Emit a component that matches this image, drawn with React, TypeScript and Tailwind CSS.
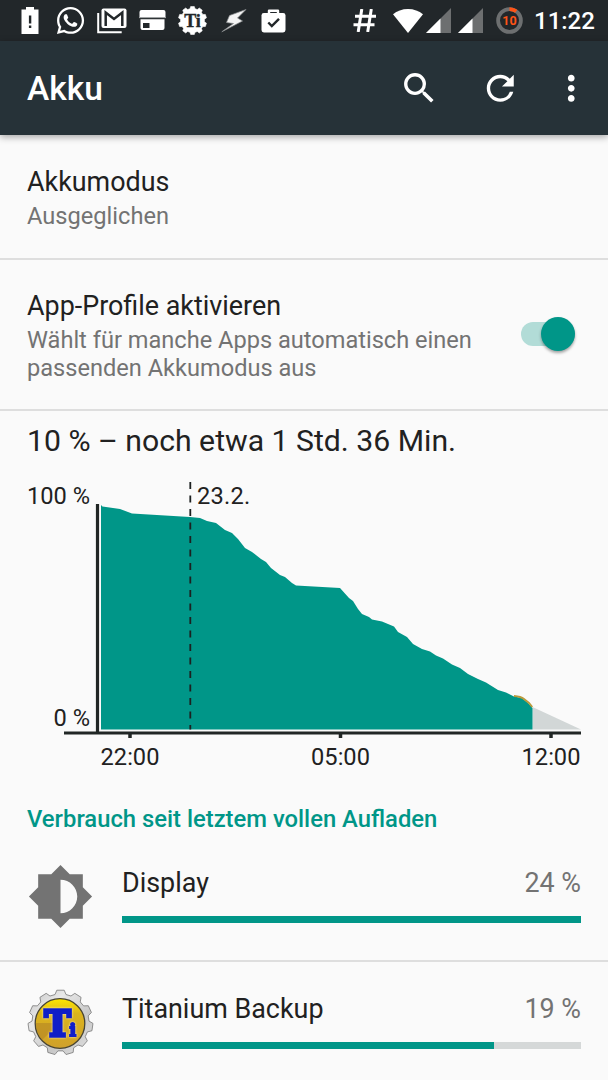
import React, { useState } from 'react';
import { FaWhatsapp } from 'react-icons/fa';
import { MdBrightnessMedium, MdMoreVert, MdRefresh, MdSearch } from 'react-icons/md';

// gear outline shared by the status bar glyph and the app icon
const gearPath = (cx: number, cy: number, teeth: number, outer: number, inner: number) => {
  const step = (Math.PI * 2) / teeth;
  const points: string[] = [];
  for (let i = 0; i < teeth; i++) {
    const mid = i * step - Math.PI / 2;
    [[-0.34, inner], [-0.2, outer], [0.2, outer], [0.34, inner]].forEach(([offset, radius]) => {
      const angle = mid + offset * step;
      points.push(`${(cx + Math.cos(angle) * radius).toFixed(2)} ${(cy + Math.sin(angle) * radius).toFixed(2)}`);
    });
  }
  return `M${points.join('L')}Z`;
};

const BatteryAlertIcon = () => (
  <svg className="w-[18px] h-[27px]" viewBox="0 0 18 27" fill="#fff">
    <path d="M5 0h8v2.5h4.5V27H.5V2.5H5z" />
    <path d="M7.9 8.5h2.4v8H7.9zM7.9 18.5h2.4v2.6H7.9z" fill="#22272a" />
  </svg>
);

const GmailIcon = () => (
  <svg className="w-[30px] h-[26px]" viewBox="0 0 30 26" fill="none">
    <path d="M1.2 5v19.3h23.5" stroke="#fff" strokeWidth="2" />
    <rect x="4.5" y="0.5" width="25" height="19.5" rx="2" fill="#fff" />
    <path d="M8.7 18V4.5L17 11l8.3-6.5V18" stroke="#22272a" strokeWidth="2.5" />
  </svg>
);

const CardIcon = () => (
  <svg className="w-[27px] h-[21px]" viewBox="0 0 27 21" fill="#fff">
    <path d="M2.5 0h22a2 2 0 0 1 2 2v5H.5V2a2 2 0 0 1 2-2z" />
    <path d="M1.5 9.2h24V18a2 2 0 0 1-2 2h-20a2 2 0 0 1-2-2z" />
    <path d="M0 7h27v1.1H0z" fill="#a0a3a4" />
    <path d="M4 13h6.5v5H4z" fill="#22272a" />
  </svg>
);

const GearIcon = () => (
  <svg className="w-[29px] h-[29px]" viewBox="0 0 29 29">
    <path d={gearPath(14.5, 14.5, 10, 14.2, 12)} fill="#fff" stroke="#fff" strokeWidth=".6" strokeLinejoin="round" />
    <text x="14.5" y="20.5" textAnchor="middle" fontSize="18" fontWeight="700" fill="#22272a" stroke="#22272a" strokeWidth=".4" className="font-['Liberation_Serif',serif]">
      Ti
    </text>
  </svg>
);

const BoltIcon = () => (
  <svg className="w-[26px] h-[24px]" viewBox="0 0 26 24">
    <path d="M25 .5L8.500 6.500 5.500 13.500l7 1L.8 22.800 21.500 12l-5-3z" fill="#f4f4f4" stroke="#8a8d8e" strokeWidth=".7" />
  </svg>
);

const ShopIcon = () => (
  <svg className="w-[25px] h-[24px]" viewBox="0 0 25 24" fill="none">
    <path d="M8 5V1.8h9V5" stroke="#fff" strokeWidth="2.4" strokeLinejoin="round" />
    <rect x=".5" y="4" width="24" height="19.5" rx="2.4" fill="#fff" />
    <path d="M7.3 13.5l3.5 3.6 7.2-7.3" stroke="#22272a" strokeWidth="2.4" />
  </svg>
);

const SignalIcon = () => (
  <svg className="w-[25px] h-[25px]" viewBox="0 0 25 25">
    <path d="M0 25L25 0v25z" fill="#6d6f70" />
    <path d="M0 25L14.5 10.5V25z" fill="#fff" />
  </svg>
);

const StatusBar = () => (
  <div className="h-[41px] bg-[#22272a] flex items-center pl-[21px] pr-[14px] text-white">
    <BatteryAlertIcon />
    <FaWhatsapp className="w-[31px] h-[31px] ml-4" />
    <div className="w-[11px]" />
    <GmailIcon />
    <div className="w-3" />
    <CardIcon />
    <div className="w-3" />
    <GearIcon />
    <div className="w-[14px]" />
    <BoltIcon />
    <div className="w-[14px]" />
    <ShopIcon />
    <div className="flex-1" />
    <svg className="w-[23px] h-[23px]" viewBox="0 0 23 23" fill="none" stroke="#fff" strokeWidth="3">
      <path d="M8.800 0L5.200 23M18.300 0l-3.600 23M2 7.200h21M.500 15.800h21" />
    </svg>
    <svg className="w-[30px] h-[24px] ml-[17px]" viewBox="0 0 30 24">
      <path d="M15 24L0 5.200C4 2 9.200 0 15 0s11 2 15 5.200z" fill="#fff" />
    </svg>
    <div className="w-[3px]" />
    <SignalIcon />
    <div className="w-[7px]" />
    <SignalIcon />
    <svg className="w-[27px] h-[27px] ml-[13px]" viewBox="0 0 27 27" fill="none" strokeWidth="3.800">
      <circle cx="13.500" cy="13.500" r="11.400" stroke="#6d6f70" />
      <circle cx="13.500" cy="13.500" r="11.400" stroke="#ff5416" pathLength="100" strokeDasharray="10 90" transform="rotate(-90 13.500 13.500)" />
      <text x="13.500" y="18" textAnchor="middle" fontSize="12.500" fontWeight="700" fill="#ff5416" className="font-[Roboto,sans-serif]">10</text>
    </svg>
    <span className="ml-[11px] w-[60px] text-[24px] font-medium leading-none whitespace-nowrap">11:22</span>
  </div>
);

const levels =
  '101 505 102.500 506.500 120 509 132 513.500 190 517 200 518 207 521 216 523 225 530 232 533 238 539 245 548 252 552 261 559 266 562 271 568 280 575 285 577 292 583 296 585.500 340 588 349 598 353 601 358 609 362 614 369 617 372 619.500 382 621.500 394 626.500 398 632 407 637 413 644 422 649 430 651.500 436 655.500 443 658.500 452 664.500 460 668 468 674 478 679 486 682.500 498 690 506 692.500 514 696.500 522 698 528 703 532.500 708';

const ticks = [
  { x: 130, label: '22:00' },
  { x: 340.5, label: '05:00' },
  { x: 551, label: '12:00' },
];

const BatteryChart = () => (
  <svg className="block w-full h-[305px]" viewBox="0 475 608 305">
    <polygon points="532.500 707 581 729.500 532.500 729.500" fill="#d2d7d7" />
    <polygon points={`${levels} 532.500 729.500 101 729.500`} fill="#009688" />
    <path d="M514 696q7 .5 10 3l5 4 3.300 4" fill="none" stroke="#b99a3c" strokeWidth="1.800" />
    <path d="M190.300 482v247.500" stroke="#1c2020" strokeWidth="1.800" strokeDasharray="6.900 6.600" />
    <path d="M97.500 504v229M64 733h517" stroke="#212625" strokeWidth="3.200" />
    <g className="font-[Roboto,sans-serif]" fontSize="23.640" fill="#212121">
      <text x="90" y="503.500" textAnchor="end">100 %</text>
      <text x="90" y="726" textAnchor="end">0 %</text>
      <text x="197" y="503.500" letterSpacing=".25">23.2.</text>
      {ticks.map(({ x, label }) => (
        <React.Fragment key={label}>
          <path d={`M${x} 733v5`} stroke="#212625" strokeWidth="3.500" />
          <text x={x} y="764.500" textAnchor="middle">{label}</text>
        </React.Fragment>
      ))}
    </g>
  </svg>
);

const TitaniumIcon = () => (
  <svg className="w-[67px] h-[67px]" viewBox="0 0 67 67">
    <defs>
      <linearGradient id="metal" x1="0" y1="0" x2="1" y2="1">
        <stop offset="0" stopColor="#c4c4c4" />
        <stop offset=".3" stopColor="#e8e8e8" />
        <stop offset=".65" stopColor="#c8c8c8" />
        <stop offset="1" stopColor="#e2e2e2" />
      </linearGradient>
      <linearGradient id="gold" x1="0" y1="0" x2="0" y2="1">
        <stop offset="0" stopColor="#ffe800" />
        <stop offset=".3" stopColor="#dcb41d" />
        <stop offset="1" stopColor="#cfa02b" />
      </linearGradient>
    </defs>
    <path d={gearPath(33.5, 33.5, 11, 32.5, 28.5)} fill="url(#metal)" stroke="#777" strokeWidth=".8" strokeLinejoin="round" />
    <circle cx="33" cy="34.500" r="24.800" fill="url(#gold)" stroke="#494532" strokeWidth="1.300" />
    <path d="M9 34L33 34 15 51Q9 44 9 34z" fill="#b48625" opacity=".6" />
    <text
      x="17.500"
      y="47"
      fontSize="35"
      fontWeight="700"
      fill="#101ec8"
      stroke="#101ec8"
      strokeWidth="3.400"
      className="font-['DejaVu_Serif',serif] drop-shadow-[0_0_1px_#fff3c0]"
    >
      T<tspan x="42.500" fontSize="17" strokeWidth="2">i</tspan>
    </text>
  </svg>
);

interface UsageRowProps {
  icon: React.ReactNode;
  name: string;
  percent: number;
  fill: number;
}

const UsageRow: React.FC<UsageRowProps> = ({ icon, name, percent, fill }) => (
  <div className="h-[126px] flex pl-[27px] pr-[27px]">
    <div className="w-[95px] pt-7 shrink-0">{icon}</div>
    <div className="flex-1 pt-8">
      <div className="flex justify-between text-[26.9px] leading-8">
        <span>{name}</span>
        <span className="text-[#737373]">{percent} %</span>
      </div>
      <div className="mt-[17px] h-[7px] bg-[#d5d8d8]">
        <div className="h-full bg-[#009688]" style={{ width: `${fill}%` }} />
      </div>
    </div>
  </div>
);

const App: React.FC = () => {
  const [profilesEnabled, setProfilesEnabled] = useState(true);

  return (
    <div className="w-[608px] h-[1080px] overflow-hidden bg-[#fafafa] text-[#212121] font-[Roboto,sans-serif]">
      <StatusBar />

      {/* App bar */}
      <header className="relative h-[94px] bg-[#263238] flex items-center pl-[27px] text-white shadow-[0_2px_7px_rgba(0,0,0,0.35)]">
        <h1 className="flex-1 text-[33.5px] font-medium pt-0.5">Akku</h1>
        <button aria-label="Suchen" className="mr-[41px]">
          <MdSearch className="w-[40.5px] h-[40.5px]" />
        </button>
        <button aria-label="Aktualisieren" className="mr-[30px]">
          <MdRefresh className="w-[40.5px] h-[40.5px]" />
        </button>
        <button aria-label="Mehr" className="mr-[17px]">
          <MdMoreVert className="w-[40.5px] h-[40.5px]" />
        </button>
      </header>

      {/* Preferences */}
      <div className="h-[125px] pl-[27px] pt-[31px] border-b-2 border-[#dedede]">
        <div className="text-[26.9px] leading-8">Akkumodus</div>
        <div className="mt-1 text-[23.64px] leading-7 text-[#737373]">Ausgeglichen</div>
      </div>
      <div className="h-[151px] pl-[27px] pr-[33px] flex justify-between border-b-2 border-[#dedede]">
        <div className="pt-[30px]">
          <div className="text-[26.9px] leading-8">App-Profile aktivieren</div>
          <div className="mt-1 text-[23.6px] leading-7 text-[#737373]">
            Wählt für manche Apps automatisch einen
            <br />
            passenden Akkumodus aus
          </div>
        </div>
        <button
          role="switch"
          aria-label="App-Profile"
          aria-checked={profilesEnabled}
          onClick={() => setProfilesEnabled(!profilesEnabled)}
          className="mt-[62px] w-[54px] h-6 rounded-full bg-[#b2dcd7] flex items-center justify-end"
        >
          <span className="w-[34px] h-[34px] rounded-full bg-[#009688] shadow-[0_2px_3px_rgba(0,0,0,0.35)]" />
        </button>
      </div>

      {/* Battery history */}
      <div className="h-[64px] pl-[27px] pt-3 text-[30.2px] leading-9">10 % – noch etwa 1 Std. 36 Min.</div>
      <BatteryChart />

      <h2 className="h-[55px] pl-[27px] pt-[25px] text-[23.8px] leading-7 font-medium text-[#009688]">
        Verbrauch seit letztem vollen Aufladen
      </h2>
      <UsageRow
        icon={<MdBrightnessMedium className="w-[67px] h-[67px] text-[#737373]" />}
        name="Display"
        percent={24}
        fill={100}
      />
      <div className="h-0.5 -mt-px mb-[-1px] bg-[#dedede]" />
      <UsageRow icon={<TitaniumIcon />} name="Titanium Backup" percent={19} fill={81} />
    </div>
  );
};

export default App;
